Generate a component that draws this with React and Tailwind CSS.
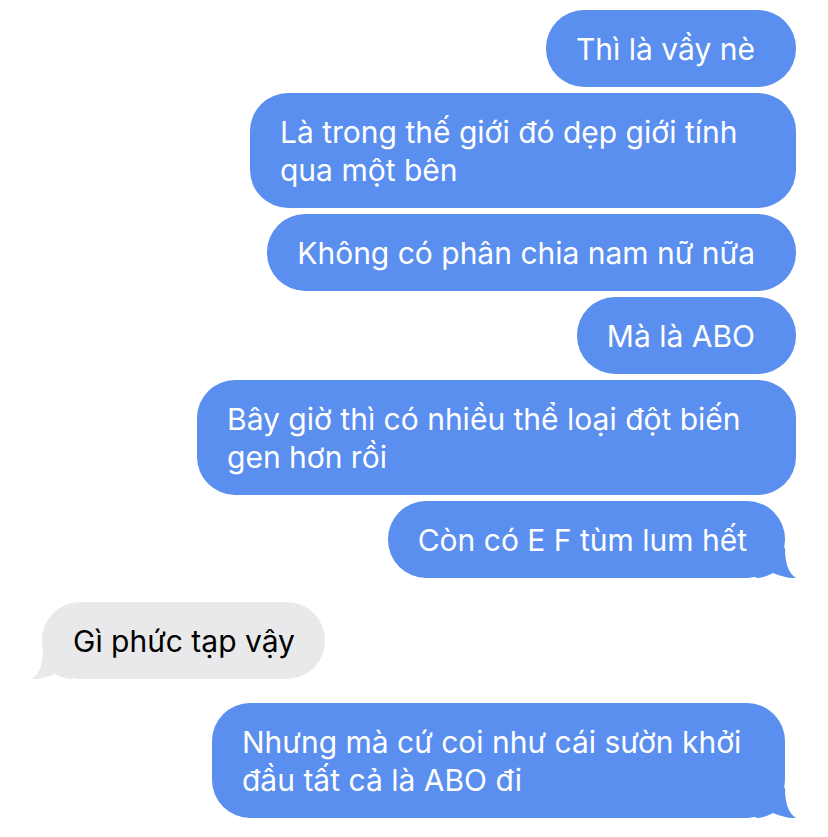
import React from 'react';

const BLUE = '#5a8eef';
const GRAY = '#e9e9eb';

// iMessage-style tail, drawn for the right side; mirrored for incoming
const Tail = ({ color, side }) => (
  <svg
    width="40"
    height="30"
    viewBox="0 0 40 30"
    className={side === 'right' ? 'absolute bottom-0 right-[-11px]' : 'absolute bottom-0 left-[-10px] -scale-x-100'}
  >
    <path d="M0 30 L0 0 L29 0 C29 14 32 25 40 30 C34 30.6 26 28.6 17 25 C12 27.6 6 30 0 30 Z" fill={color} />
  </svg>
);

const Out = ({ lines, tail, w = '', className = '' }) => (
  <div className={`flex justify-end pr-[32px] ${className}`}>
    <div
      className={`relative rounded-[38px] bg-[#5a8eef] text-white pt-[20px] pb-[19px] pl-[30px] ${w} ${tail ? 'mr-[11px] pr-[38px]' : 'pr-[41px]'}`}
    >
      {lines.map((l, i) => (
        <div key={i} className="whitespace-nowrap">{l}</div>
      ))}
      {tail && <Tail color={BLUE} side="right" />}
    </div>
  </div>
);

const In = ({ lines, className = '' }) => (
  <div className={`flex justify-start pl-[42px] ${className}`}>
    <div className="relative rounded-[38px] bg-[#e9e9eb] text-black pt-[20px] pb-[19px] pl-[31px] pr-[30px]">
      {lines.map((l, i) => (
        <div key={i} className="whitespace-nowrap">{l}</div>
      ))}
      <Tail color={GRAY} side="left" />
    </div>
  </div>
);

export default function App() {
  return (
    <div className="min-h-screen w-[828px] bg-white pt-[10px] font-['Inter',sans-serif] text-[30px] leading-[38px]">
      <div className="flex flex-col gap-[6px]">
        <Out lines={['Thì là vầy nè']} />
        <Out lines={['Là trong thế giới đó dẹp giới tính', 'qua một bên']} w="w-[546px]" />
        <Out lines={['Không có phân chia nam nữ nữa']} />
        <Out lines={['Mà là ABO']} />
        <Out lines={['Bây giờ thì có nhiều thể loại đột biến', 'gen hơn rồi']} w="w-[599px]" />
        <Out lines={['Còn có E F tùm lum hết']} tail />
      </div>
      <In lines={['Gì phức tạp vậy']} className="mt-[24px]" />
      <Out lines={['Nhưng mà cứ coi như cái sườn khởi', 'đầu tất cả là ABO đi']} tail w="w-[573px]" className="mt-[24px]" />
    </div>
  );
}
